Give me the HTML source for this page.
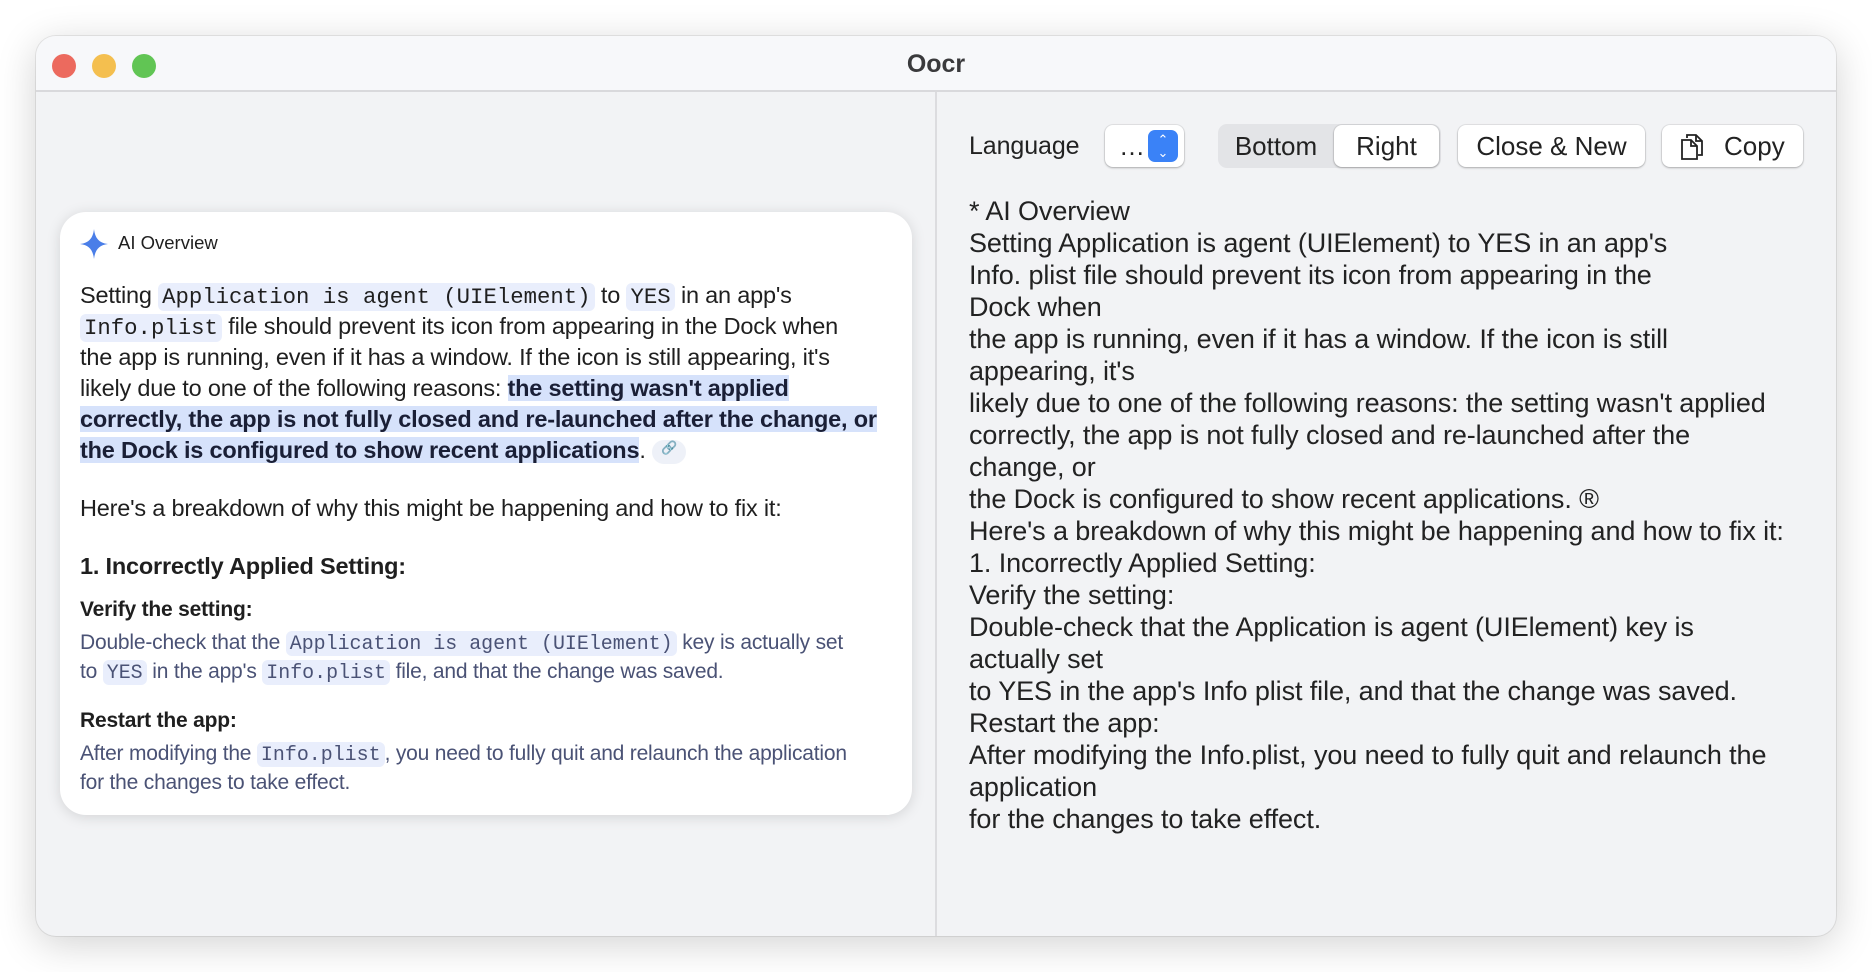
<!DOCTYPE html>
<html><head><meta charset="utf-8"><style>
*{margin:0;padding:0;box-sizing:border-box}
body{width:1872px;height:972px;background:#fff;font-family:"Liberation Sans",sans-serif;position:relative;overflow:hidden}
.win{position:absolute;left:36px;top:36px;width:1800px;height:900px;border-radius:20px;background:#f2f3f5;box-shadow:0 8px 40px rgba(0,0,0,.18),0 0 0 1px rgba(0,0,0,.08);overflow:hidden}
.tb{position:absolute;left:0;top:0;width:100%;height:56px;background:#f7f8fa;border-bottom:2px solid #d9d9dc}
.dot{position:absolute;top:18px;width:24px;height:24px;border-radius:50%}
.title{position:absolute;left:0;width:100%;top:14px;text-align:center;font-weight:bold;font-size:25px;color:#3a3a3c}
.div{position:absolute;left:899px;top:56px;width:2px;height:844px;background:#dcdcdf}
.card{position:absolute;left:24px;top:176px;width:852px;height:603px;background:#fff;border-radius:26px;box-shadow:0 2px 14px rgba(0,0,0,.13)}
.l{position:absolute;white-space:nowrap}
.p{font-size:23.5px;color:#1f1f1f;letter-spacing:-0.2px;left:20px}
.s{font-size:21px;color:#4a5275;letter-spacing:-0.2px;left:20px}
.c{font-family:"Liberation Mono",monospace;background:#e9eefc;border-radius:6px;padding:1px 4px;letter-spacing:0;font-size:0.95em}
.h{background:#d6e2fb;font-weight:bold;color:#1a1f36}
.b{font-weight:bold;color:#1f1f1f}
.r{position:absolute;left:933px;font-size:27px;color:#222;white-space:nowrap;letter-spacing:-0.1px}
.btn{position:absolute;top:89px;height:42px;background:#fff;border-radius:8px;box-shadow:0 1px 2px rgba(0,0,0,.25),0 0 0 1px rgba(0,0,0,.06);font-size:26px;color:#222;text-align:center;line-height:42px}
</style></head><body>
<div class="win">
<div class="tb">
<div class="dot" style="left:16px;background:#ec6a5e"></div>
<div class="dot" style="left:56px;background:#f4bf4f"></div>
<div class="dot" style="left:96px;background:#61c554"></div>
<div class="title">Oocr</div>
</div>
<div class="div"></div>

<div class="card">
<svg style="position:absolute;left:20px;top:17px" width="28" height="30" viewBox="0 0 28 30"><path d="M14 0 C15 9 19 14 28 15 C19 16 15 21 14 30 C13 21 9 16 0 15 C9 14 13 9 14 0Z" fill="#4a7ee8"/></svg>
<div class="l" style="left:58px;top:20px;font-size:18.5px;color:#1f1f1f">AI Overview</div>
<div class="l p" style="top:70px">Setting <span class="c">Application is agent (UIElement)</span> to <span class="c">YES</span> in an app's</div>
<div class="l p" style="top:101px"><span class="c">Info.plist</span> file should prevent its icon from appearing in the Dock when</div>
<div class="l p" style="top:132px">the app is running, even if it has a window. If the icon is still appearing, it's</div>
<div class="l p" style="top:163px">likely due to one of the following reasons: <span class="h">the setting wasn't applied</span></div>
<div class="l p" style="top:194px"><span class="h">correctly, the app is not fully closed and re-launched after the change, or</span></div>
<div class="l p" style="top:225px"><span class="h">the Dock is configured to show recent applications</span>. <span style="display:inline-block;width:34px;height:24px;border-radius:12px;background:#eef1f8;vertical-align:middle;text-align:center;font-size:13px;color:#556">&#128279;</span></div>
<div class="l p" style="top:283px">Here's a breakdown of why this might be happening and how to fix it:</div>
<div class="l p" style="top:341px;font-weight:bold;color:#1f1f1f">1. Incorrectly Applied Setting:</div>
<div class="l s b" style="top:386px">Verify the setting:</div>
<div class="l s" style="top:419px">Double-check that the <span class="c">Application is agent (UIElement)</span> key is actually set</div>
<div class="l s" style="top:448px">to <span class="c">YES</span> in the app's <span class="c">Info.plist</span> file, and that the change was saved.</div>
<div class="l s b" style="top:497px">Restart the app:</div>
<div class="l s" style="top:530px">After modifying the <span class="c">Info.plist</span>, you need to fully quit and relaunch the application</div>
<div class="l s" style="top:559px">for the changes to take effect.</div>
</div>

<div class="r" style="top:96px;font-size:25px">Language</div>
<div class="btn" style="left:1069px;width:79px;text-align:left;padding-left:14px">…<div style="position:absolute;right:6px;top:5px;width:30px;height:32px;background:#3a82f7;border-radius:7px;color:#fff;font-size:13px;line-height:13px;padding-top:3px;text-align:center">&#8963;<br>&#8964;</div></div>
<div style="position:absolute;left:1182px;top:88px;width:223px;height:44px;background:#e3e4e7;border-radius:9px"></div>
<div style="position:absolute;left:1182px;top:88px;width:116px;height:44px;line-height:44px;text-align:center;font-size:26px;color:#222">Bottom</div>
<div class="btn" style="left:1298px;width:105px">Right</div>
<div class="btn" style="left:1422px;width:187px">Close &amp; New</div>
<div class="btn" style="left:1626px;width:141px;text-align:left;padding-left:62px">Copy
<svg style="position:absolute;left:18px;top:8px" width="24" height="28" viewBox="0 0 24 28" fill="none" stroke="#222" stroke-width="1.8"><path d="M7 5V2h9l6 6v14h-4"/><path d="M16 2v6h6"/><path d="M2 7h9l6 6v13H2z"/><path d="M11 7v6h6"/></svg></div>

<div class="r" style="top:160px">* AI Overview</div>
<div class="r" style="top:192px">Setting Application is agent (UIElement) to YES in an app's</div>
<div class="r" style="top:224px">Info. plist file should prevent its icon from appearing in the</div>
<div class="r" style="top:256px">Dock when</div>
<div class="r" style="top:288px">the app is running, even if it has a window. If the icon is still</div>
<div class="r" style="top:320px">appearing, it's</div>
<div class="r" style="top:352px">likely due to one of the following reasons: the setting wasn't applied</div>
<div class="r" style="top:384px">correctly, the app is not fully closed and re-launched after the</div>
<div class="r" style="top:416px">change, or</div>
<div class="r" style="top:448px">the Dock is configured to show recent applications. ®</div>
<div class="r" style="top:480px">Here's a breakdown of why this might be happening and how to fix it:</div>
<div class="r" style="top:512px">1. Incorrectly Applied Setting:</div>
<div class="r" style="top:544px">Verify the setting:</div>
<div class="r" style="top:576px">Double-check that the Application is agent (UIElement) key is</div>
<div class="r" style="top:608px">actually set</div>
<div class="r" style="top:640px">to YES in the app's Info plist file, and that the change was saved.</div>
<div class="r" style="top:672px">Restart the app:</div>
<div class="r" style="top:704px">After modifying the Info.plist, you need to fully quit and relaunch the</div>
<div class="r" style="top:736px">application</div>
<div class="r" style="top:768px">for the changes to take effect.</div>
</div>
</body></html>
